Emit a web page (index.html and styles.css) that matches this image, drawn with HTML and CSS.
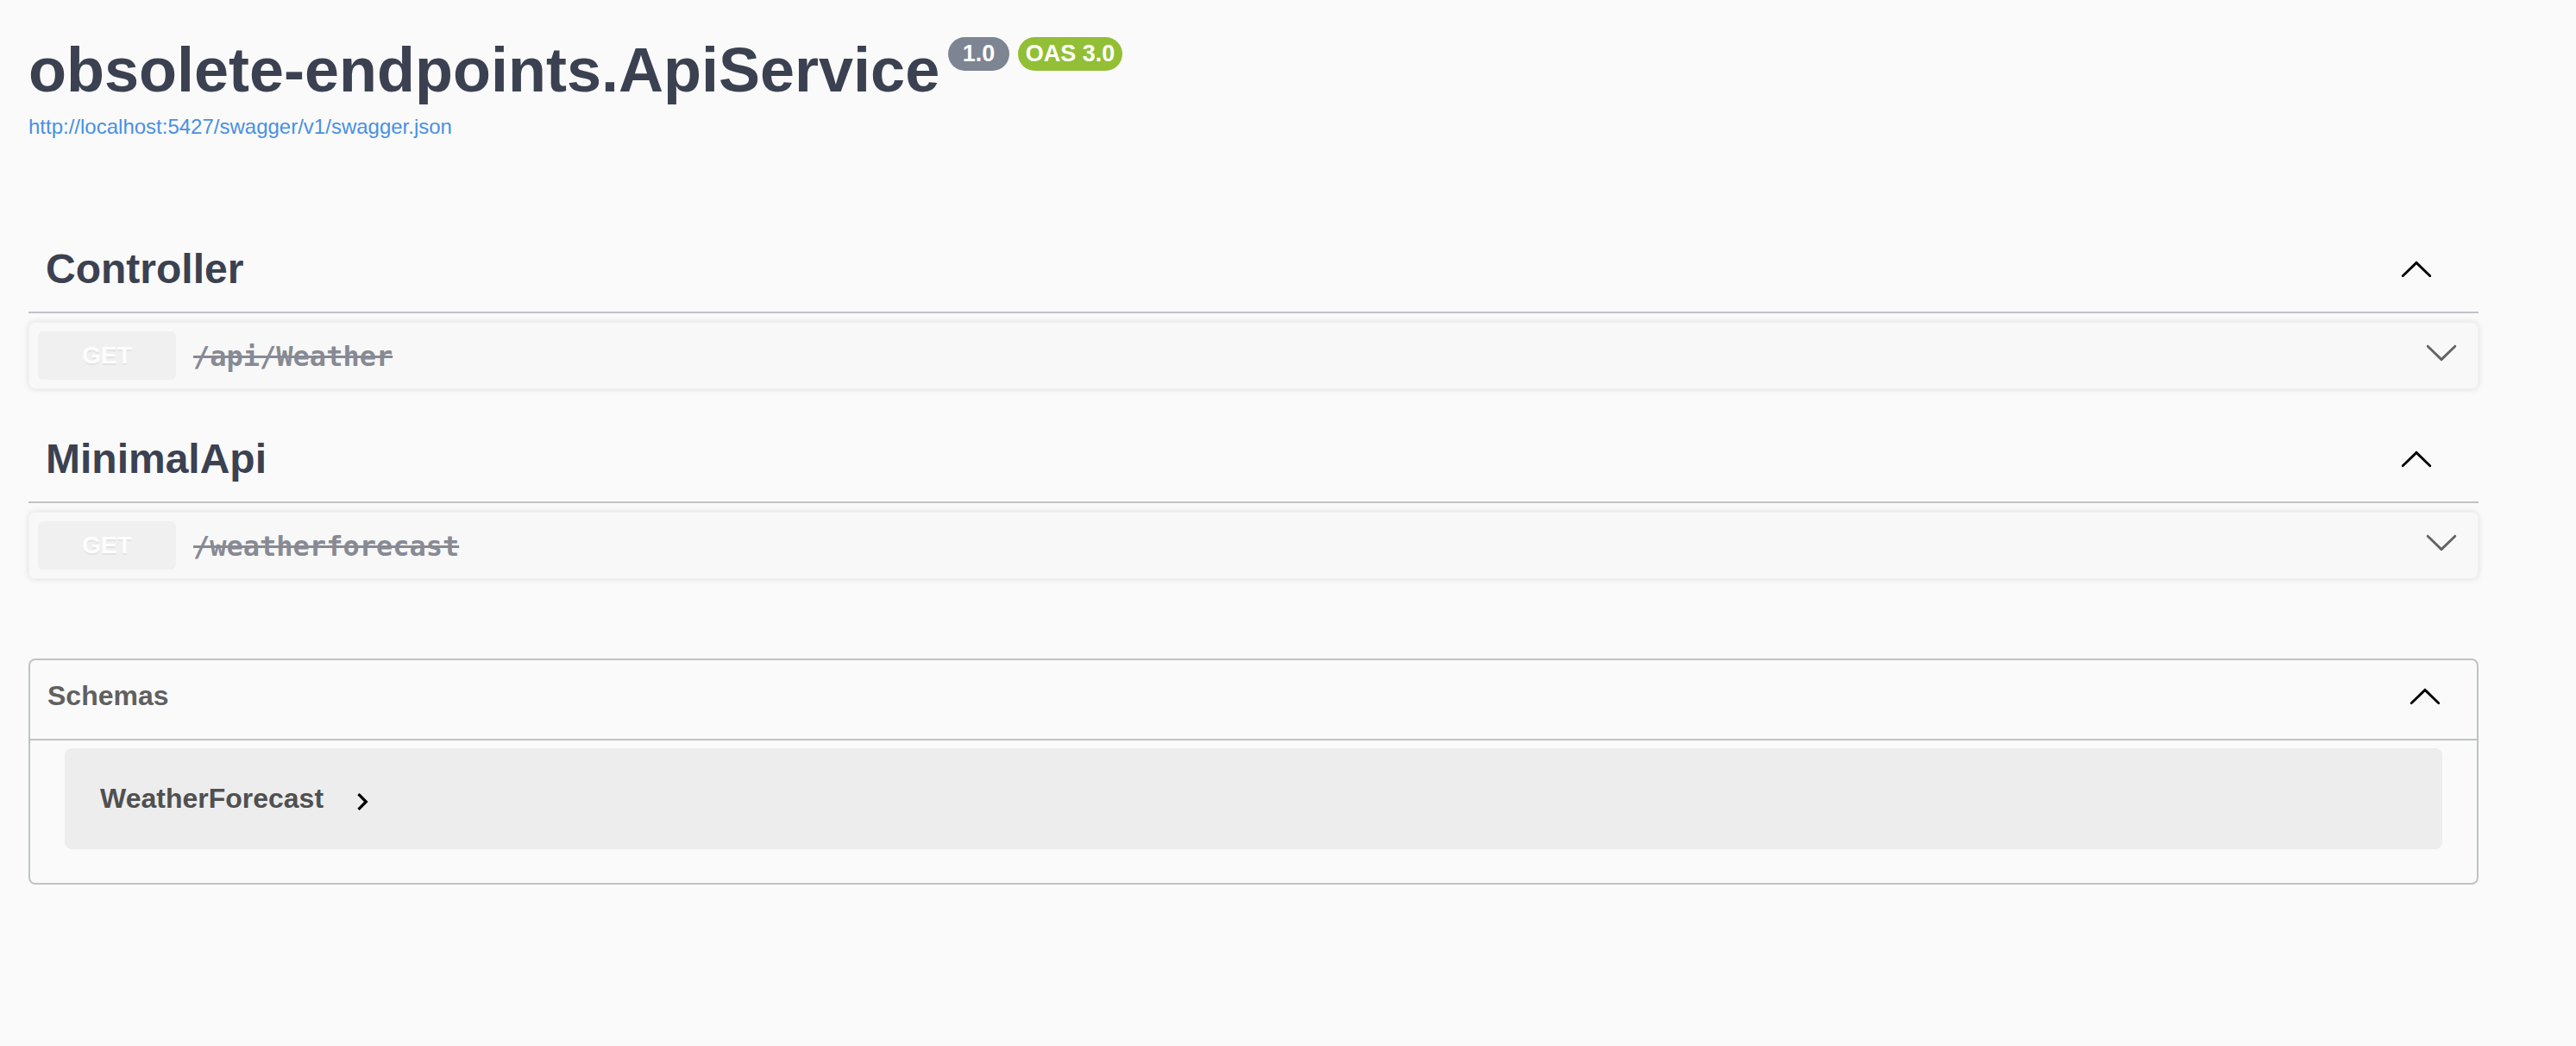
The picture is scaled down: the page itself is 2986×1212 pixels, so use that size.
FILE: index.html
```html
<!DOCTYPE html>
<html lang="en">
<head>
<meta charset="utf-8">
<title>obsolete-endpoints.ApiService</title>
<link rel="stylesheet" href="styles.css">
</head>
<body>
<div class="wrapper">
  <div class="info">
    <h2 class="title">obsolete-endpoints.ApiService<small class="badge"><pre class="version"> 1.0 </pre></small><small class="badge stamp"><pre class="version">OAS 3.0</pre></small></h2>
    <a class="url" href="#">http://localhost:5427/swagger/v1/swagger.json</a>
  </div>

  <div class="tags">
    <section class="tag-section">
      <div class="tag">
        <h3 class="tag-title">Controller</h3>
        <svg class="arrow" width="40" height="40" viewBox="0 0 20 20"><path transform="rotate(180 10 10.5)" d="M17.418 6.109c.272-.268.709-.268.979 0s.271.701 0 .969l-7.908 7.83c-.27.268-.707.268-.979 0l-7.908-7.830c-.27-.268-.27-.701 0-.969.271-.268.709-.268.979 0L10 13.25l7.418-7.141z"/></svg>
      </div>
      <div class="opblock">
        <div class="summary">
          <span class="method">GET</span>
          <span class="path">/api/Weather</span>
          <svg class="arrow arrow-down" width="40" height="40" viewBox="0 0 20 20"><path d="M17.418 6.109c.272-.268.709-.268.979 0s.271.701 0 .969l-7.908 7.83c-.27.268-.707.268-.979 0l-7.908-7.83c-.27-.268-.27-.701 0-.969.271-.268.709-.268.979 0L10 13.25l7.418-7.141z"/></svg>
        </div>
      </div>
    </section>

    <section class="tag-section">
      <div class="tag">
        <h3 class="tag-title">MinimalApi</h3>
        <svg class="arrow" width="40" height="40" viewBox="0 0 20 20"><path transform="rotate(180 10 10.5)" d="M17.418 6.109c.272-.268.709-.268.979 0s.271.701 0 .969l-7.908 7.83c-.27.268-.707.268-.979 0l-7.908-7.83c-.27-.268-.27-.701 0-.969.271-.268.709-.268.979 0L10 13.25l7.418-7.141z"/></svg>
      </div>
      <div class="opblock">
        <div class="summary">
          <span class="method">GET</span>
          <span class="path">/weatherforecast</span>
          <svg class="arrow arrow-down" width="40" height="40" viewBox="0 0 20 20"><path d="M17.418 6.109c.272-.268.709-.268.979 0s.271.701 0 .969l-7.908 7.83c-.27.268-.707.268-.979 0l-7.908-7.83c-.27-.268-.27-.701 0-.969.271-.268.709-.268.979 0L10 13.25l7.418-7.141z"/></svg>
        </div>
      </div>
    </section>

    <section class="models">
      <div class="models-head">
        <h4 class="models-title">Schemas</h4>
        <svg class="arrow" width="40" height="40" viewBox="0 0 20 20"><path transform="rotate(180 10 10.5)" d="M17.418 6.109c.272-.268.709-.268.979 0s.271.701 0 .969l-7.908 7.83c-.27.268-.707.268-.979 0l-7.908-7.83c-.27-.268-.27-.701 0-.969.271-.268.709-.268.979 0L10 13.25l7.418-7.141z"/></svg>
      </div>
      <div class="model-container">
        <span class="model-title">WeatherForecast</span>
        <svg class="model-toggle" width="40" height="40" viewBox="0 0 24 24"><path d="M10 6L8.59 7.41 13.17 12l-4.58 4.59L10 18l6-6z"/></svg>
      </div>
    </section>
  </div>
</div>
</body>
</html>
```

FILE: styles.css
```css
html, body {
  margin: 0;
  padding: 0;
  background: #fafafa;
}

body {
  font-family: "Liberation Sans", Arial, sans-serif;
  color: #3b4151;
}

.wrapper {
  width: 2840px;
  margin: 0 0 0 33px;
  padding-top: 40px;
}

.info {
  display: flex;
  flex-direction: column;
  align-items: flex-start;
}

.title {
  margin: 0;
  font-size: 72px;
  line-height: 83px;
  font-weight: 700;
  color: #3b4151;
  white-space: nowrap;
}

.badge {
  display: inline-block;
  vertical-align: top;
  margin: 3px 0 0 10px;
  padding: 4px 9px;
  border-radius: 114px;
  background: #7d8492;
  font-size: 27px;
  line-height: 31px;
}

.badge.stamp {
  background: #92bf35;
}

.version {
  margin: 0;
  padding: 0;
  font-family: "Liberation Sans", Arial, sans-serif;
  font-weight: 700;
  color: #fff;
  white-space: pre;
}

.url {
  margin-top: 10px;
  font-size: 24px;
  line-height: 28px;
  color: #4990e2;
  text-decoration: none;
}

.tags {
  display: flex;
  flex-direction: column;
  margin-top: 100px;
}

.tag-section {
  display: flex;
  flex-direction: column;
}

.tag {
  display: flex;
  align-items: center;
  justify-content: space-between;
  height: 60px;
  padding: 20px 52px 20px 20px;
  border-bottom: 2px solid rgba(59, 65, 81, 0.3);
  margin-bottom: 10px;
}

.tag-title {
  margin: 0;
  font-size: 48px;
  line-height: 55px;
  font-weight: 700;
  color: #3b4151;
}

.arrow {
  display: block;
  flex: none;
  fill: #000;
}

.opblock {
  margin-bottom: 30px;
  border: 1px solid #ebebeb;
  border-radius: 8px;
  background: rgba(235, 235, 235, 0.1);
  box-shadow: 0 0 6px rgba(0, 0, 0, 0.19);
  opacity: 0.6;
}

.summary {
  display: flex;
  align-items: center;
  padding: 10px 22px 10px 10px;
}

.method {
  min-width: 160px;
  padding: 12px 0;
  border-radius: 6px;
  background: #ebebeb;
  color: #fff;
  font-size: 28px;
  line-height: 32px;
  font-weight: 700;
  text-align: center;
  text-shadow: 0 2px 0 rgba(0, 0, 0, 0.1);
}

.path {
  flex: 1;
  padding: 0 20px;
  margin-top: 2px;
  font-family: "DejaVu Sans Mono", "Liberation Mono", monospace;
  font-weight: 700;
  font-size: 32px;
  line-height: 40px;
  color: #3b4151;
  text-decoration: line-through;
}

.arrow-down {
  margin-bottom: 9px;
}

.models {
  margin-top: 62px;
  border: 2px solid rgba(59, 65, 81, 0.3);
  border-radius: 8px;
  padding-bottom: 39px;
}

.models-head {
  display: flex;
  align-items: center;
  justify-content: space-between;
  height: 40px;
  padding: 21px 40px 30px 20px;
  border-bottom: 2px solid rgba(59, 65, 81, 0.3);
}

.models-title {
  margin: 0;
  font-size: 32px;
  line-height: 37px;
  font-weight: 700;
  color: #606060;
}

.model-container {
  display: flex;
  align-items: center;
  height: 117px;
  margin: 9px 40px 0 40px;
  padding-left: 41px;
  border-radius: 8px;
  background: rgba(0, 0, 0, 0.05);
}

.model-title {
  font-size: 32px;
  line-height: 37px;
  font-weight: 700;
  color: #505050;
}

.model-toggle {
  display: block;
  margin: 6px 0 0 25px;
  fill: #000;
}
```
